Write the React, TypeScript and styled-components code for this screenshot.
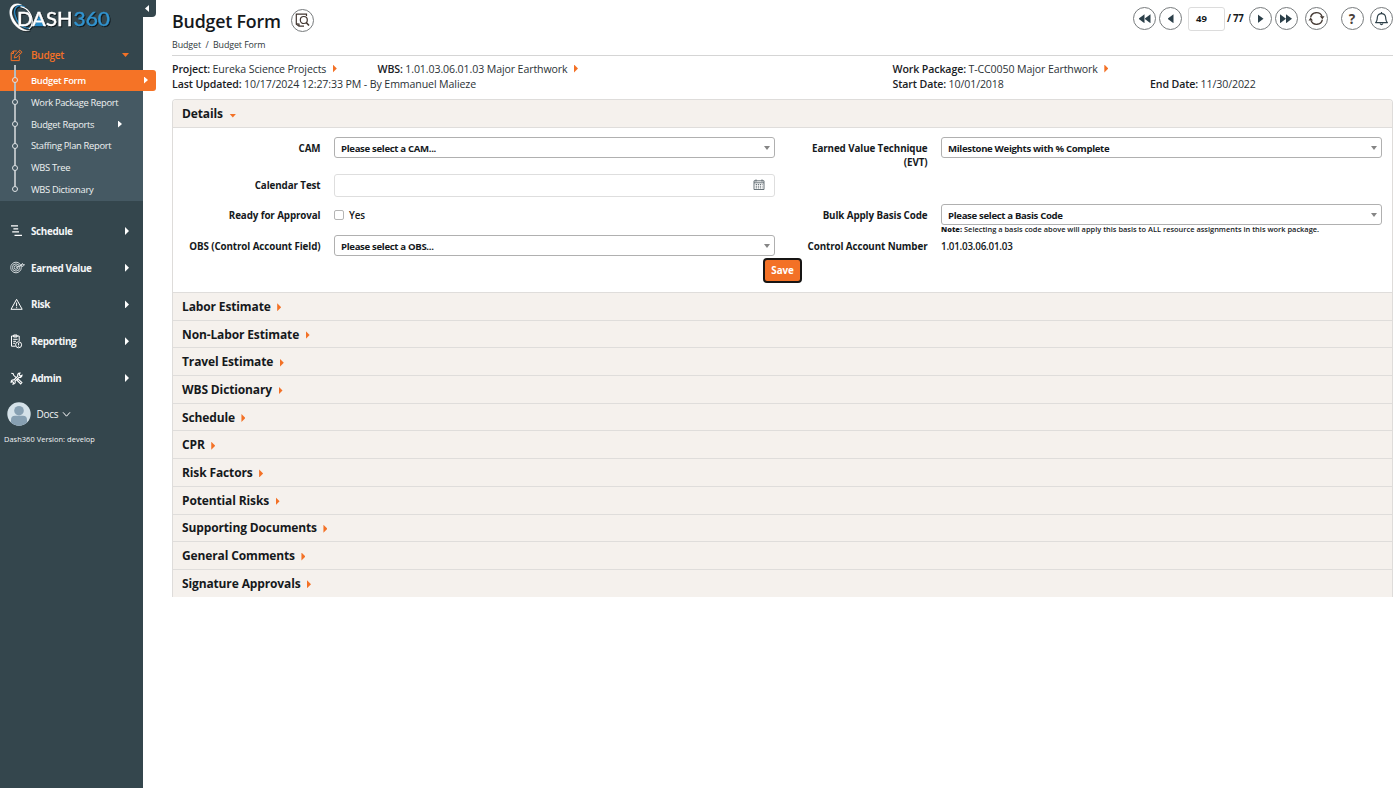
import React from "react";
import styled, { createGlobalStyle } from "styled-components";

const GlobalStyle = createGlobalStyle`
  * { box-sizing: border-box; }
  body { margin: 0; background: #fff; overflow: hidden; }
  body, button, input { font-family: "Open Sans", "Noto Sans", sans-serif; color: #15191c; }
`;

const Page = styled.div`
  display: flex;
  width: 1400px;
  height: 788px;
`;

const Sidebar = styled.nav`
  position: relative;
  flex: none;
  width: 143px;
  height: 788px;
  background: #34464d;
  color: #f3f5f6;
`;

const CollapseTab = styled.div`
  position: absolute;
  left: 143px;
  top: 0;
  width: 13px;
  height: 17px;
  display: flex;
  align-items: center;
  justify-content: center;
  padding-right: 5px;
  border-radius: 0 0 4px 0;
  background: #34464d;
`;

const LogoBox = styled.div`
  display: flex;
  height: 40px;
  padding: 2px 0 0 8px;
`;

const MenuRow = styled.div<{ $active?: boolean; $height: number }>`
  display: flex;
  align-items: center;
  height: ${(p) => p.$height}px;
  padding: 0 14px ${(p) => (p.$active ? 0 : 1)}px 10px;
  color: ${(p) => (p.$active ? "#f37126" : "#f3f5f6")};
  font-size: ${(p) => (p.$active ? 10.1 : 9.9)}px;
  font-weight: ${(p) => (p.$active ? 600 : 700)};
  letter-spacing: ${(p) => (p.$active ? -0.3 : -0.36)}px;
`;

const MenuIcon = styled.span`
  display: flex;
  width: 21px;
`;

const MenuLabel = styled.span`
  flex: 1;
  white-space: nowrap;
`;

const Triangle = styled.i<{ $dir: "left" | "right" | "down"; $w: number; $h: number; $color: string }>`
  display: inline-block;
  flex: none;
  width: ${(p) => p.$w}px;
  height: ${(p) => p.$h}px;
  background: ${(p) => p.$color};
  clip-path: ${(p) =>
    p.$dir === "right"
      ? "polygon(0 0, 100% 50%, 0 100%)"
      : p.$dir === "left"
      ? "polygon(100% 0, 100% 100%, 0 50%)"
      : "polygon(0 0, 100% 0, 50% 100%)"};
`;

const SubMenu = styled.div`
  position: relative;
  height: 131px;
  background: #455963;
`;

const Rail = styled.div`
  position: absolute;
  left: 14px;
  top: -5px;
  width: 1.5px;
  height: 122px;
  background: #b5bcc0;
`;

const SubRow = styled.div<{ $active?: boolean }>`
  display: flex;
  align-items: center;
  width: ${(p) => (p.$active ? 156 : 143)}px;
  height: ${(p) => (p.$active ? 21 : 21.8)}px;
  padding: ${(p) => (p.$active ? 0 : 0.7)}px ${(p) => (p.$active ? 8 : 21)}px ${(p) => (p.$active ? 1 : 0)}px 11.5px;
  background: ${(p) => (p.$active ? "#f57326" : "transparent")};
  border-radius: 0 3px 3px 0;
  font-size: 9.4px;
  font-weight: ${(p) => (p.$active ? 600 : 500)};
  letter-spacing: -0.32px;
  color: ${(p) => (p.$active ? "#fff" : "#eef1f2")};
`;

const Dot = styled.span<{ $active?: boolean }>`
  position: relative;
  flex: none;
  width: 6px;
  height: 6px;
  margin-right: 13.5px;
  border: 1px solid #dfe3e5;
  border-radius: 50%;
  background: ${(p) => (p.$active ? "#f57326" : "#455963")};
`;

const User = styled.div`
  display: flex;
  align-items: center;
  height: 36px;
  padding-left: 7px;
  font-size: 10px;
  letter-spacing: -0.25px;
`;

const UserName = styled.span`
  margin: 0 3.5px 1px 5.5px;
`;

const Version = styled.div`
  padding-left: 4px;
  font-size: 7.4px;
  line-height: 14px;
  letter-spacing: 0.07px;
  white-space: nowrap;
`;

const Main = styled.main`
  flex: 1;
  padding: 0 7px 0 29px;
`;

const TopBar = styled.header`
  display: flex;
  height: 38px;
`;

const Title = styled.h1`
  display: flex;
  align-items: center;
  margin: 3px 10px 0 0;
  height: 36px;
  font-size: 17.8px;
  font-weight: 600;
  letter-spacing: -0.18px;
  white-space: nowrap;
`;

const CircleButton = styled.span<{ $ml?: number }>`
  display: flex;
  flex: none;
  align-items: center;
  justify-content: center;
  width: 23px;
  height: 23px;
  margin-left: ${(p) => p.$ml ?? 0}px;
  border: 1px solid #777b7d;
  border-radius: 50%;
  font: 700 13.5px "Noto Sans", sans-serif;
  color: #4a3f3a;
`;

const TitleAction = styled.div`
  padding-top: 9px;
`;

const Pager = styled.div`
  display: flex;
  align-items: center;
  height: 37.5px;
  margin-left: auto;
`;

const PageInput = styled.span`
  width: 37px;
  height: 24px;
  margin-left: 6px;
  padding-left: 7px;
  border: 1px solid #dcdcdc;
  border-radius: 3px;
  font-size: 9.5px;
  font-weight: 700;
  line-height: 22px;
`;

const PageTotal = styled.span`
  width: 24px;
  padding-left: 2px;
  font-size: 9.7px;
  font-weight: 700;
  letter-spacing: -0.25px;
  white-space: nowrap;
`;

const Crumbs = styled.div`
  height: 18px;
  border-bottom: 1px solid #d5d5d5;
  font-size: 8.9px;
  line-height: 14px;
  letter-spacing: -0.1px;
  color: #30383c;
`;

const Info = styled.section`
  display: grid;
  grid-template-columns: 205.5px 515px 257.5px 1fr;
  grid-template-rows: 15px 15px;
  padding-top: 5px;
  height: 43px;
`;

const Fact = styled.div<{ $span?: number }>`
  grid-column: span ${(p) => p.$span ?? 1};
  display: flex;
  align-items: center;
  gap: 2.5px;
  font-size: 10.6px;
  letter-spacing: -0.11px;
  color: #2b3236;
  white-space: nowrap;
  b { font-weight: 600; color: #1a2024; }
  i { margin-left: 4px; }
`;

const Panel = styled.section`
  width: 1221px;
  height: 498px;
  border: 1px solid #dedcda;
  border-bottom: 0;
  border-radius: 4px 4px 0 0;
  overflow: hidden;
`;

const SectionHead = styled.h2<{ $open?: boolean }>`
  display: flex;
  align-items: center;
  gap: 7px;
  height: ${(p) => (p.$open ? 28 : 27.7)}px;
  margin: 0;
  padding: 0 9px;
  background: #f5f1ed;
  border-${(p) => (p.$open ? "bottom" : "top")}: 1px solid #dfdddb;
  font-size: 12px;
  font-weight: 700;
  letter-spacing: -0.13px;
  i { position: relative; top: ${(p) => (p.$open ? 2 : 1)}px; left: -0.5px; }
`;

const Form = styled.div`
  display: flex;
  flex-direction: column;
  height: 164px;
  padding-top: 9px;
`;

const FieldRow = styled.div<{ $height: number }>`
  display: grid;
  grid-template-columns: 148px 441px 140px 441px;
  column-gap: 13px;
  height: ${(p) => p.$height}px;
`;

const Label = styled.label<{ $top?: number }>`
  padding-top: ${(p) => p.$top ?? 4.5}px;
  padding-right: 0.5px;
  font-size: 9.8px;
  font-weight: 700;
  line-height: 14.5px;
  letter-spacing: -0.1px;
  text-align: right;
  white-space: nowrap;
`;

const Select = styled.div`
  display: flex;
  align-items: center;
  justify-content: space-between;
  height: 21px;
  padding: 2px 4px 0 6px;
  border: 1px solid #b0b0b0;
  border-radius: 3px;
  font-size: 9.6px;
  font-weight: 700;
  line-height: 18px;
  letter-spacing: -0.33px;
  i { margin-bottom: 1px; }
`;

const DateInput = styled.div`
  display: flex;
  align-items: center;
  justify-content: flex-end;
  height: 23px;
  padding: 0 9px 1px 0;
  border: 1px solid #dedede;
  border-radius: 3px;
`;

const CheckLine = styled.div`
  display: flex;
  align-items: center;
  gap: 5px;
  height: 22px;
  font-size: 9.9px;
  font-weight: 600;
  letter-spacing: -0.1px;
  padding-bottom: 1px;
`;

const Checkbox = styled.span`
  position: relative;
  top: 0.5px;
  width: 10px;
  height: 10px;
  border: 1px solid #b5b5b5;
  border-radius: 2px;
`;

const Note = styled.div`
  font-size: 7.4px;
  line-height: 9px;
  letter-spacing: 0.02px;
  white-space: nowrap;
  font-weight: 600;
  b { font-weight: 800; }
`;

const StaticValue = styled.div`
  padding-top: 4.5px;
  font-size: 9.8px;
  font-weight: 600;
  line-height: 14.5px;
  letter-spacing: -0.22px;
`;

const SaveButton = styled.button`
  align-self: center;
  width: 39px;
  height: 25px;
  margin-top: -1px;
  padding: 0 0 1px;
  border: 2px solid #171514;
  border-radius: 4px;
  background: #f37126;
  color: #fff;
  font-size: 9.8px;
  font-weight: 700;
  letter-spacing: -0.1px;
`;

const LogoSvg = styled.svg`
  filter: drop-shadow(1px 1px 0.5px #10191d);
`;

const Logo = () => (
  <LogoSvg width="106" height="34" viewBox="0 0 106 34">
    <path d="M14 3.2C7-1 0 4 2 13.5C4 23 13 31 21.5 28.5C14 28.5 6.5 21 4.2 13C2.8 6 7.5 1.8 14 3.2Z" fill="#fff" stroke="#fff" strokeWidth=".3" />
    <path d="M17 5.2C10 1.2 5.3 5.5 7 13C8.6 20 14 26.5 21 26.2" fill="none" stroke="#2b8ac4" strokeWidth="1.3" />
    <path d="M12.5 4.6C20 5.6 25.3 14 24 21.8C23.6 24.3 22.4 26 20.8 27" fill="none" stroke="#fff" strokeWidth="1.2" />
    <path d="M26.3 24.2L31.4 13L36.5 24.2Z" fill="#2b8ac4" />
    <text x="9" y="24.3" fontFamily="Lato, sans-serif" fontSize="18.5" fontWeight="500" fill="#fff" stroke="#fff" strokeWidth=".35" textLength="55.5" lengthAdjust="spacingAndGlyphs">DASH</text>
    <text x="65.5" y="24.3" fontFamily="Lato, sans-serif" fontSize="18.5" fontWeight="500" fill="#3294d0" stroke="#3294d0" strokeWidth=".35" textLength="36.5" lengthAdjust="spacingAndGlyphs">360</text>
  </LogoSvg>
);

const EditIcon = () => (
  <svg width="13" height="13" viewBox="0 0 13 13" fill="none" stroke="#f37126" strokeWidth="1">
    <path d="M6.8 2H3.2L1.2 4.2V11.6H9.3V7" />
    <path d="M4.2 9L5 6.3L9.8 1.2L12 3.2L7 8.2ZM8.6 2.5L10.8 4.5M1.5 4.5H3.5V2.2" />
  </svg>
);

const ScheduleIcon = () => (
  <svg width="13" height="13" viewBox="0 0 13 13" stroke="#fff" strokeWidth="1.3">
    <path d="M1 1.8H8M3.4 4.8H8.2M2.2 7.8H9M4.5 11.3H12" />
  </svg>
);

const TargetIcon = () => (
  <svg width="15" height="13" viewBox="0 0 15 13" fill="none" stroke="#dfe4e6" strokeWidth=".9">
    <circle cx="6" cy="6.5" r="5.3" />
    <circle cx="6" cy="6.5" r="3.6" />
    <circle cx="6" cy="6.5" r="1.8" />
    <path d="M6 6.5L12 4M10.5 4.6L12.5 2.4L12.7 3.6H14.5L13 5.4Z" />
  </svg>
);

const RiskIcon = () => (
  <svg width="13" height="13" viewBox="0 0 13 13" fill="none" stroke="#fff" strokeWidth="1">
    <path d="M6.6 1.3L12.2 11.3H1Z" strokeLinejoin="round" />
    <path d="M6.6 4.5V8.3M6.6 9.2V10.2" />
  </svg>
);

const ReportIcon = () => (
  <svg width="13" height="15" viewBox="0 0 13 15" fill="none" stroke="#fff" strokeWidth="1">
    <path d="M5.5 12.2H1.5V2H9.2V7M3.7 2V1H7V3H3.7ZM3.2 5.3H7.6M3.2 7.3H6M3.2 9.3H5" />
    <circle cx="8.6" cy="10.8" r="3" />
    <path d="M8.6 9V11.4M8.6 12V12.7" />
  </svg>
);

const AdminIcon = () => (
  <svg width="13" height="13" viewBox="0 0 13 13" fill="none" stroke="#fff" strokeWidth="1.1">
    <path d="M1.3 1.2L3.2 1.8L3.7 3.3L6.2 5.7M7.2 7.2L8.2 7L11.9 10.6L10.7 12L7 8.2Z" />
    <path d="M12 3.2L10.3 4L9.2 2.8L10 1.1C8 1 7.2 2.6 7.8 4.1L3.9 8C2.5 7.4 1 8.6 1.1 10.2L2.6 9.7L3.6 10.7L3 12.1C4.8 12.1 5.7 10.7 5.1 9.2L9 5.3C10.5 5.8 12 4.8 12 3.2Z" />
  </svg>
);

const Avatar = () => (
  <svg width="24" height="24" viewBox="0 0 24 24">
    <circle cx="12" cy="12" r="11.7" fill="#d5e2e9" />
    <circle cx="12" cy="8.7" r="4.8" fill="#87a0b2" />
    <path d="M4 20.5V18Q4 13.8 8 13.8H16Q20 13.8 20 18V20.5A11.7 11.7 0 0 1 4 20.5Z" fill="#87a0b2" />
  </svg>
);

const PreviewIcon = () => (
  <svg width="15" height="15" viewBox="0 0 15 15" fill="none" stroke="#40352f" strokeWidth="1.2">
    <path d="M11.5 3V1.2H1.3V11.2L4 13.2H9" />
    <path d="M1.3 10.8L4 11V13" />
    <circle cx="8.8" cy="7" r="3.5" />
    <path d="M11.2 9.6L14 12.6" strokeWidth="1.5" />
  </svg>
);

const RefreshIcon = () => (
  <svg width="17" height="15" viewBox="0 0 17 15" fill="none" stroke="#463b35" strokeWidth="1.4">
    <path d="M2.6 6.3A6 6 0 0 1 14 5.4M14.4 8.7A6 6 0 0 1 3 9.6" />
    <path d="M11.8 5.2H16.5L14.4 8.3ZM.5 9.5L2.6 6.5L5 9.5Z" fill="#463b35" stroke="none" />
  </svg>
);

const BellIcon = () => (
  <svg width="15" height="15" viewBox="0 0 15 15" fill="none" stroke="#2e4049" strokeWidth="1.2">
    <path d="M1.6 11.6C3.5 10 3 8.5 3.4 6C3.8 3.8 5.2 2.7 7.5 2.7S11.2 3.8 11.6 6C12 8.5 11.5 10 13.4 11.6Z" strokeLinejoin="round" />
    <path d="M7.5 1V2.7M6 12.5Q7.5 14.6 9 12.5" />
  </svg>
);

const CalendarIcon = () => (
  <svg width="12" height="12" viewBox="0 0 12 12" fill="none" stroke="#58636a" strokeWidth=".9">
    <path d="M1 1.8H11V10.5H1ZM1 3.8H11M3 .4V2.6M9 .4V2.6" />
    <path d="M2.7 5.5H9.5M2.7 7.2H9.5M2.7 8.9H9.5" strokeDasharray="1.3 .8" />
  </svg>
);

const ChevronIcon = () => (
  <svg width="9" height="7" viewBox="0 0 9 7" fill="none" stroke="#fff" strokeWidth="1">
    <path d="M1 1.3L4.5 5.2L8 1.3" />
  </svg>
);

const Orange = () => <Triangle $dir="right" $w={4} $h={8} $color="#f37126" />;
const SelectArrow = () => <Triangle $dir="down" $w={6} $h={4} $color="#858585" />;
const PagerArrow = ({ dir }: { dir: "left" | "right" }) => <Triangle $dir={dir} $w={6} $h={9} $color="#2b3f49" />;

const subItems = ["Budget Form", "Work Package Report", "Budget Reports", "Staffing Plan Report", "WBS Tree", "WBS Dictionary"];
const menuItems = [
  { label: "Schedule", icon: <ScheduleIcon /> },
  { label: "Earned Value", icon: <TargetIcon /> },
  { label: "Risk", icon: <RiskIcon /> },
  { label: "Reporting", icon: <ReportIcon /> },
  { label: "Admin", icon: <AdminIcon /> },
];
const sections = [
  "Labor Estimate", "Non-Labor Estimate", "Travel Estimate", "WBS Dictionary", "Schedule", "CPR",
  "Risk Factors", "Potential Risks", "Supporting Documents", "General Comments", "Signature Approvals",
];

const MenuGroup = styled.div`
  height: 195px;
  padding-top: 12px;
`;

export default function App() {
  return (
    <Page>
      <GlobalStyle />
      <Sidebar>
        <CollapseTab><Triangle $dir="left" $w={4} $h={7} $color="#fff" /></CollapseTab>
        <LogoBox><Logo /></LogoBox>
        <MenuRow $active $height={30}>
          <MenuIcon><EditIcon /></MenuIcon>
          <MenuLabel>Budget</MenuLabel>
          <Triangle $dir="down" $w={7} $h={4} $color="#f37126" />
        </MenuRow>
        <SubMenu>
          <Rail />
          {subItems.map((label, i) => (
            <SubRow key={label} $active={i === 0}>
              <Dot $active={i === 0} />
              <MenuLabel>{label}</MenuLabel>
              {(i === 0 || i === 2) && <Triangle $dir="right" $w={4} $h={7} $color="#fff" />}
            </SubRow>
          ))}
        </SubMenu>
        <MenuGroup>
          {menuItems.map((m) => (
            <MenuRow key={m.label} $height={36.8}>
              <MenuIcon>{m.icon}</MenuIcon>
              <MenuLabel>{m.label}</MenuLabel>
              <Triangle $dir="right" $w={4} $h={8} $color="#fff" />
            </MenuRow>
          ))}
        </MenuGroup>
        <User><Avatar /><UserName>Docs</UserName><ChevronIcon /></User>
        <Version>Dash360 Version: develop</Version>
      </Sidebar>
      <Main>
        <TopBar>
          <Title>Budget Form</Title>
          <TitleAction><CircleButton><PreviewIcon /></CircleButton></TitleAction>
          <Pager>
            <CircleButton><PagerArrow dir="left" /><PagerArrow dir="left" /></CircleButton>
            <CircleButton $ml={3}><PagerArrow dir="left" /></CircleButton>
            <PageInput>49</PageInput>
            <PageTotal>/ 77</PageTotal>
            <CircleButton><PagerArrow dir="right" /></CircleButton>
            <CircleButton $ml={2.5}><PagerArrow dir="right" /><PagerArrow dir="right" /></CircleButton>
            <CircleButton $ml={7.5}><RefreshIcon /></CircleButton>
            <CircleButton $ml={12.5}>?</CircleButton>
            <CircleButton $ml={6.5}><BellIcon /></CircleButton>
          </Pager>
        </TopBar>
        <Crumbs>Budget &nbsp;/&nbsp; Budget Form</Crumbs>
        <Info>
          <Fact><b>Project:</b>Eureka Science Projects<Orange /></Fact>
          <Fact><b>WBS:</b>1.01.03.06.01.03 Major Earthwork<Orange /></Fact>
          <Fact $span={2}><b>Work Package:</b>T-CC0050 Major Earthwork<Orange /></Fact>
          <Fact $span={2}><b>Last Updated:</b>10/17/2024 12:27:33 PM - By Emmanuel Malieze</Fact>
          <Fact><b>Start Date:</b>10/01/2018</Fact>
          <Fact><b>End Date:</b>11/30/2022</Fact>
        </Info>
        <Panel>
          <SectionHead $open>Details<Triangle $dir="down" $w={7} $h={4} $color="#f37126" /></SectionHead>
          <Form>
            <FieldRow $height={37}>
              <Label>CAM</Label>
              <Select>Please select a CAM...<SelectArrow /></Select>
              <Label>Earned Value Technique<br />(EVT)</Label>
              <Select>Milestone Weights with % Complete<SelectArrow /></Select>
            </FieldRow>
            <FieldRow $height={30}>
              <Label>Calendar Test</Label>
              <DateInput><CalendarIcon /></DateInput>
            </FieldRow>
            <FieldRow $height={31}>
              <Label>Ready for Approval</Label>
              <CheckLine><Checkbox />Yes</CheckLine>
              <Label>Bulk Apply Basis Code</Label>
              <div>
                <Select>Please select a Basis Code<SelectArrow /></Select>
                <Note><b>Note:</b> Selecting a basis code above will apply this basis to ALL resource assignments in this work package.</Note>
              </div>
            </FieldRow>
            <FieldRow $height={24}>
              <Label>OBS (Control Account Field)</Label>
              <Select>Please select a OBS...<SelectArrow /></Select>
              <Label>Control Account Number</Label>
              <StaticValue>1.01.03.06.01.03</StaticValue>
            </FieldRow>
            <SaveButton>Save</SaveButton>
          </Form>
          {sections.map((s) => (
            <SectionHead key={s}>{s}<Orange /></SectionHead>
          ))}
        </Panel>
      </Main>
    </Page>
  );
}
